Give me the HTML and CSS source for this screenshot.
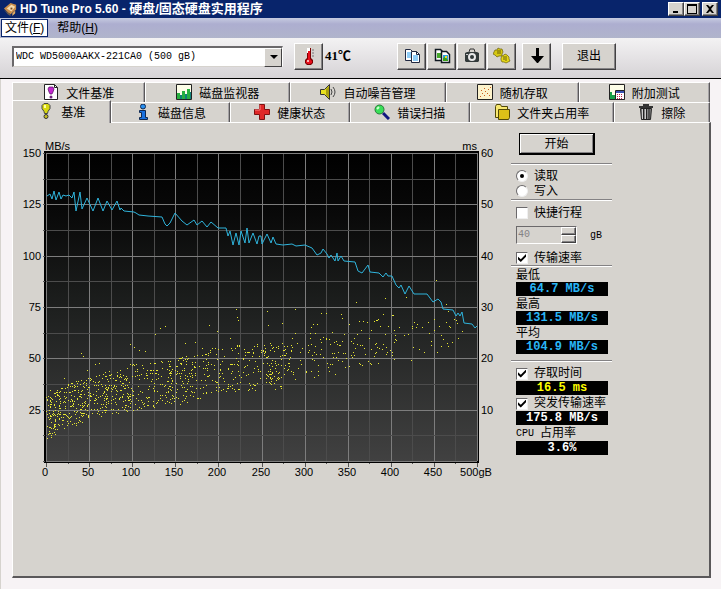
FILE: index.html
```
<!DOCTYPE html>
<html lang="zh-CN">
<head>
    <meta charset="UTF-8">
    <meta name="viewport" content="width=device-width, initial-scale=1.0">
    <title>HD Tune Pro 5.60</title>
    <link rel="stylesheet" href="styles.css">
</head>
<body>
    <header class="titlebar">
        <svg class="app-icon" viewBox="0 0 16 16">
            <path d="M1 7 L8 1 L14 3 L14 8 L8 13 L5 11z" fill="#c98d4a"/>
            <path d="M4 7 L9 3 L13 5 L9 10z" fill="#f6dcae"/>
            <path d="M8 6h2v2h-2z" fill="#7a4a20"/>
            <path d="M1 8 L5 11 L8 13 L8 15 L5 13z" fill="#6b5a4a"/>
            <path d="M10 12l3 -3v3l-3 3z" fill="#e8b060"/>
        </svg>
        <h1>HD Tune Pro 5.60 - <span>硬盘/固态硬盘实用程序</span></h1>
        <div class="window-buttons">
            <button aria-label="最小化"><svg viewBox="0 0 12 10"><path d="M3 7h5v2h-5z"/></svg></button>
            <button aria-label="最大化"><svg viewBox="0 0 12 10"><path d="M1 0h10v10h-10zM2 2v7h8v-7z" fill-rule="evenodd"/></svg></button>
            <button class="close" aria-label="关闭"><svg viewBox="0 0 12 10"><path d="M2 1h2l2 2 2-2h2L7 5l3 4H8L6 7 4 9H2l3-4z"/></svg></button>
        </div>
    </header>

    <nav class="menubar">
        <button class="open">文件(<u>F</u>)</button>
        <button>帮助(<u>H</u>)</button>
    </nav>

    <div class="toolbar">
        <div class="drive">
            <select aria-label="硬盘">
                <option>WDC WD5000AAKX-221CA0 (500 gB)</option>
            </select>
        </div>
        <button class="tool" aria-label="温度">
            <svg viewBox="0 0 18 18">
                <path d="M7 1h4v10l2 2v3l-2 2H7l-2-2v-3l2-2z" fill="#7b0000"/>
                <path d="M7 1h3v5H7z" fill="#fff"/>
                <path d="M8 4h2v8l2 2v2l-2 1H8l-2-1v-2l2-2z" fill="#e8101c"/>
                <path d="M7 13h2v2H7z" fill="#ffb0b0"/>
                <path d="M12 3h2M12 6h2M12 9h2" stroke="#777"/>
            </svg>
        </button>
        <span class="temp">41℃</span>
        <div class="tools">
            <button class="tool" aria-label="复制文本">
                <svg viewBox="0 0 18 18">
                    <path d="M2.500 2.500h5l2 2v9h-7z" fill="#fff" stroke="#202840"/>
                    <path d="M4 6h4M4 8h4M4 10h4" stroke="#209cf0"/>
                    <path d="M8.500 4.500h5l3 3v8h-8z" fill="#fff" stroke="#202840"/>
                    <path d="M13.500 4.500v3h3" fill="none" stroke="#202840"/>
                    <path d="M10 9h5M10 11h5M10 13h5" stroke="#209cf0"/>
                </svg>
            </button>
            <button class="tool" aria-label="复制图像">
                <svg viewBox="0 0 18 18">
                    <path d="M2.500 2.500h5l2 2v9h-7z" fill="#fff" stroke="#101820" stroke-width="1.500"/>
                    <path d="M4 6h4v5H4z" fill="#46a82c"/>
                    <path d="M8.500 4.500h5l3 3v8h-8z" fill="#fff" stroke="#101820" stroke-width="1.500"/>
                    <path d="M10 8h5v6h-5z" fill="#2aa0e0"/>
                    <path d="M10 14v-3l2-1 3 3v1z" fill="#38a018"/>
                    <path d="M12 9h2v2h-2z" fill="#f0e020"/>
                </svg>
            </button>
            <button class="tool" aria-label="截图">
                <svg viewBox="0 0 18 18">
                    <path d="M6 5l1-3h4l1 3" fill="none" stroke="#333" stroke-width="1"/>
                    <path d="M2 6l2-1h10l2 1v8l-1 1H3l-1-1z" fill="#333a3a"/>
                    <circle cx="9" cy="10" r="4" fill="#e8e8e8"/>
                    <circle cx="9" cy="10" r="2" fill="#303838"/>
                    <path d="M3 7h2v1H3z" fill="#ccc"/>
                </svg>
            </button>
            <button class="tool" aria-label="选项">
                <svg viewBox="0 0 18 18">
                    <path d="M1 5l1-2 2 0 1-2 2 1 2 0 1 3-1 2 0 2-3 0-2 1-2-2-2-1z" fill="#d6c810" stroke="#6a6008" stroke-width="0.700"/>
                    <path d="M8 11l1-2 2-1 1-1 2 1 2 2 0 2 1 2-2 1-2 1-2-1-2 0-1-2z" fill="#e6d818" stroke="#6a6008" stroke-width="0.700"/>
                    <path d="M5 3v4M7 3v4M11 9v4M13 9v5" stroke="#6a6008"/>
                </svg>
            </button>
            <button class="tool save" aria-label="保存">
                <svg viewBox="0 0 18 18"><path d="M8 1h3v8h5l-6 7h-1l-6-7h5z"/></svg>
            </button>
            <button class="exit">退出</button>
        </div>
    </div>

    <main>
        <div class="tabs" role="tablist">
            <div class="tab-row back">
                <button role="tab" class="w-133">
                    <svg viewBox="0 0 16 16">
                        <path d="M1.500 .5h10l3 3v12h-13z" fill="#fff" stroke="#222"/>
                        <path d="M11.500 .5v3h3" fill="none" stroke="#222"/>
                        <path d="M6 3h4l1 2-1 3-1 2H7L6 8 5 5z" fill="#c428d0" stroke="#50105c" stroke-width="0.700"/>
                        <circle cx="8" cy="13" r="1.500" fill="#70207c"/>
                    </svg>文件基准
                </button>
                <button role="tab" class="w-144">
                    <svg viewBox="0 0 16 16">
                        <path d="M.5 .5h15v15H.5z" fill="#fdfde8" stroke="#222"/>
                        <path d="M1 9h3v6H1zM6 7h3v8H6zM11 5h3v10h-3z" fill="#28b040"/>
                        <path d="M4 11h2v4H4zM9 10h2v5H9zM14 8h1v7h-1z" fill="#108078"/>
                    </svg>磁盘监视器
                </button>
                <button role="tab" class="w-156">
                    <svg viewBox="0 0 16 16">
                        <path d="M.5 5.500h4l5-5v15l-5-5h-4z" fill="#e8e020" stroke="#333"/>
                        <path d="M6 5v6l3 3V2z" fill="#aaa010"/>
                        <path d="M11 5q2 3 0 6M13 3q4 5 0 10" fill="none" stroke="#444"/>
                    </svg>自动噪音管理
                </button>
                <button role="tab" class="w-132">
                    <svg viewBox="0 0 16 16">
                        <path d="M.5 .5h15v15H.5z" fill="#fdf3cc" stroke="#222"/>
                        <path d="M3 12h1v1H3zM5 9h1v1H5zM4 6h1v1H4zM7 11h1v1H7zM8 7h1v1H8zM10 9h1v1h-1zM11 5h1v1h-1zM13 3h1v1h-1zM12 11h1v1h-1zM7 4h1v1H7z" fill="#d06020"/>
                    </svg>随机存取
                </button>
                <button role="tab" class="w-131">
                    <svg viewBox="0 0 16 16">
                        <path d="M.5 .5h15v15H.5z" fill="#fdfde8" stroke="#222"/>
                        <path d="M1 8h2v7H1zM3 11h3v4H3z" fill="#18a048"/>
                        <path d="M6.500 6.500h9v9h-9z" fill="#fff" stroke="#222"/>
                        <path d="M7 7h8v2H7z" fill="#3850b0"/>
                        <path d="M8 10h1v1H8zM10 10h1v1h-1zM12 10h1v1h-1zM8 12h1v1H8zM10 12h1v1h-1zM12 12h1v1h-1zM8 14h1v1H8zM10 14h1v1h-1zM12 14h1v1h-1z" fill="#c02050"/>
                    </svg>附加测试
                </button>
            </div>
            <div class="tab-row front">
                <button role="tab" class="w-99 active" aria-selected="true">
                    <svg viewBox="0 0 16 16">
                        <path d="M6 .5h4l2 2v3l-2 3-.5 2h-3L6 8.500 4 5.500v-3z" fill="#d8d810" stroke="#444"/>
                        <path d="M6 2h2v3H6z" fill="#ffffa0"/>
                        <circle cx="8" cy="13.500" r="2" fill="#c8c020" stroke="#333"/>
                    </svg>基准
                </button>
                <button role="tab" class="w-118">
                    <svg viewBox="0 0 16 16">
                        <circle cx="8" cy="2.500" r="2.500" fill="#2890f0" stroke="#102850"/>
                        <path d="M4.500 6.500h6v7h2v2h-8v-2h2v-5h-2z" fill="#1870e0" stroke="#102850"/>
                    </svg>磁盘信息
                </button>
                <button role="tab" class="w-120">
                    <svg viewBox="0 0 16 16">
                        <path d="M5.500 .5h5v5h5v5h-5v5h-5v-5h-5v-5h5z" fill="#e02828" stroke="#801010"/>
                        <path d="M6 1v5H1" fill="none" stroke="#ff8080"/>
                    </svg>健康状态
                </button>
                <button role="tab" class="w-120">
                    <svg viewBox="0 0 16 16">
                        <path d="M9 9l6 6" stroke="#101880" stroke-width="3"/>
                        <circle cx="5.500" cy="5.500" r="4.500" fill="#38e058" stroke="#287838"/>
                        <path d="M3 5l2-2" stroke="#d0ffd0" stroke-width="2"/>
                    </svg>错误扫描
                </button>
                <button role="tab" class="w-144">
                    <svg viewBox="0 0 16 16">
                        <path d="M1.500 13.500v-11l1-2h4l1 2h6v11z" fill="#f8e870" stroke="#504808"/>
                        <path d="M4.500 15.500v-10h11v8l-1 2z" fill="#dcc018" stroke="#504808"/>
                    </svg>文件夹占用率
                </button>
                <button role="tab" class="w-96">
                    <svg viewBox="0 0 16 16">
                        <path d="M5 0h6v2h4v2H1V2h4z" fill="#333"/>
                        <path d="M2.500 4.500h11l-1 11h-9z" fill="#808080" stroke="#222"/>
                        <path d="M5.500 5v10M8.500 5v10M11 5v10" stroke="#222"/>
                        <path d="M4.500 5v10M7.500 5v10" stroke="#ccc"/>
                    </svg>擦除
                </button>
            </div>
        </div>

        <section class="panel">
            <div class="chart">
                <svg id="chart" viewBox="13 137 484 344">
                    <defs>
                        <linearGradient id="plot-bg" x1="0" y1="0" x2="0" y2="1">
                            <stop offset="0" stop-color="#000"/>
                            <stop offset="0.200" stop-color="#090909"/>
                            <stop offset="0.500" stop-color="#1d1f1e"/>
                            <stop offset="1" stop-color="#414141"/>
                        </linearGradient>
                    </defs>
                    <rect x="44" y="151" width="435" height="312" fill="#000"/>
                    <rect x="46" y="153" width="431" height="308" fill="url(#plot-bg)"/>
                    <g id="grid" shape-rendering="crispEdges"></g>
                    <path id="access" fill="#e6e632" shape-rendering="crispEdges"/>
                    <polyline id="transfer" fill="none" stroke="#2fb4dc"/>
                    <g id="labels"></g>
                </svg>
            </div>

            <form class="side">
                <button type="button" class="start">开始</button>
                <hr>
                <div class="modes">
                    <label><input type="radio" name="mode" checked>读取</label>
                    <label><input type="radio" name="mode">写入</label>
                </div>
                <hr>
                <label class="short"><input type="checkbox">快捷行程</label>
                <div class="stroke-size">
                    <div class="spinner">
                        <input type="text" id="stroke" value="40" disabled>
                        <div class="spin-buttons">
                            <button type="button" aria-label="增加" disabled></button>
                            <button type="button" aria-label="减少" disabled></button>
                        </div>
                    </div>
                    <label for="stroke"><span class="latin">gB</span></label>
                </div>
                <label><input type="checkbox" checked>传输速率</label>
                <hr>
                <div class="results">
                    <label for="min">最低</label>
                    <output id="min" class="rate">64.7 MB/s</output>
                    <label for="max">最高</label>
                    <output id="max" class="rate">131.5 MB/s</output>
                    <label for="avg">平均</label>
                    <output id="avg" class="rate">104.9 MB/s</output>
                </div>
                <hr>
                <div class="results more">
                    <label><input type="checkbox" checked>存取时间</label>
                    <output class="time">16.5 ms</output>
                    <label><input type="checkbox" checked>突发传输速率</label>
                    <output>175.8 MB/s</output>
                    <label for="cpu"><span class="latin">CPU</span>占用率</label>
                    <output id="cpu">3.6%</output>
                </div>
            </form>
        </section>
    </main>

    <script>
        var LEFT = 46, RIGHT = 477, TOP = 153, BOTTOM = 461;

        function add(parent, tag, attrs, text) {
            var el = document.createElementNS('http://www.w3.org/2000/svg', tag);
            for (var key in attrs) {
                el.setAttribute(key, attrs[key]);
            }
            if (text !== undefined) {
                el.textContent = text;
            }
            document.getElementById(parent).appendChild(el);
        }

        // grid lines, every second one is a main line with a tick
        for (var i = 0; i <= 20; i++) {
            var x = Math.round(LEFT + i * (RIGHT - LEFT) / 20);
            var tick = i % 2 ? 1 : 4;
            add('grid', 'rect', {x: x, y: TOP, width: 1, height: BOTTOM - TOP, fill: i % 2 ? '#4c4c4c' : '#7d7d7d'});
            add('grid', 'rect', {x: x, y: BOTTOM + 2, width: 1, height: tick, fill: '#555'});
            if (i % 2 === 0) {
                add('labels', 'text', {x: x - 1, y: 476, 'text-anchor': 'middle'}, i === 20 ? '500gB' : i * 25);
            }
        }
        for (var j = 0; j <= 12; j++) {
            var y = Math.round(TOP + j * (BOTTOM - TOP) / 12);
            add('grid', 'rect', {x: LEFT, y: y, width: RIGHT - LEFT, height: 1, fill: j % 2 ? '#4c4c4c' : '#7d7d7d'});
            add('grid', 'rect', {x: 43, y: y, width: 2, height: 1, fill: '#555'});
            if (j % 2 === 0 && j < 12) {
                add('labels', 'text', {x: 41, y: y + 4, 'text-anchor': 'end'}, 150 - j / 2 * 25);
                add('labels', 'text', {x: 481, y: y + 4}, 60 - j / 2 * 10);
            }
        }
        add('labels', 'text', {x: 45, y: 150}, 'MB/s');
        add('labels', 'text', {x: 477, y: 150, 'text-anchor': 'end'}, 'ms');

        // transfer rate
        var transfer = [
            47,196, 50,194, 52,199, 54,191, 56,200, 59,192, 61,199, 63,195, 66,196, 69,195, 72,198, 74,192,
            76,211, 80,192, 82,209, 87,198, 93,211, 98,198, 103,211, 107,201, 112,210, 117,201, 120,210,
            121,208, 124,211, 134,212, 136,213, 139,215, 148,216, 162,217, 165,224, 167,226, 170,223,
            173,217, 175,213, 182,221, 187,225, 194,220, 197,225, 202,221, 207,227, 211,222, 218,228,
            226,228, 228,236, 230,231, 233,245, 236,233, 239,245, 241,231, 245,243, 247,228, 249,243,
            253,233, 257,244, 259,236, 261,236, 262,244, 267,234, 271,243, 273,237, 276,244, 283,245,
            292,244, 296,246, 305,245, 312,248, 317,255, 321,253, 323,249, 327,254, 329,258, 331,255,
            335,261, 337,253, 338,261, 341,256, 344,261, 355,262, 358,271, 362,273, 368,265, 370,272,
            379,273, 383,277, 386,273, 388,276, 392,276, 396,285, 399,288, 401,285, 405,294, 409,286,
            414,294, 427,294, 433,302, 438,299, 441,302, 443,309, 453,310, 456,316, 458,313, 460,316,
            462,312, 464,323, 472,324, 475,328, 477,326
        ];
        document.getElementById('transfer').setAttribute('points', transfer.join(' '));

        // access time: from x, to x, number of samples, upper and lower edge at both ends
        var bands = [
            [46, 60, 100, 396, 441, 388, 431],
            [60, 90, 150, 386, 432, 376, 421],
            [90, 130, 180, 376, 418, 366, 412],
            [130, 200, 230, 364, 411, 354, 401],
            [200, 288, 230, 347, 394, 342, 389],
            [288, 345, 75, 334, 383, 330, 375],
            [345, 400, 60, 322, 373, 318, 360],
            [400, 462, 28, 322, 358, 318, 350]
        ];
        var seed = 71;
        function random() {
            seed = (seed * 16807) % 2147483647;
            return seed / 2147483647;
        }
        var d = '';
        function dot(x, y) {
            d += 'M' + Math.round(x) + ' ' + Math.round(y) + 'h1v1h-1z';
        }
        bands.forEach(function (b) {
            for (var n = 0; n < b[2]; n++) {
                var t = random();
                var upper = b[3] + t * (b[5] - b[3]);
                var lower = b[4] + t * (b[6] - b[4]);
                dot(b[0] + t * (b[1] - b[0]), upper + random() * (lower - upper));
            }
        });
        // slow samples outside of the bands
        var outliers = [
            81,353, 83,356, 130,344, 134,347, 139,350, 145,351, 155,334, 160,328, 165,326, 185,343, 195,342,
            209,325, 217,331, 230,338, 237,317, 238,320, 236,309, 267,311, 268,325, 282,323, 295,309, 295,333,
            311,327, 313,324, 317,324, 321,313, 326,313, 341,314, 342,318, 356,302, 374,321, 378,319, 385,298,
            383,314, 393,315, 406,297, 436,280, 446,304, 457,323, 462,331, 411,360, 437,352, 64,378, 50,390,
            87,370, 95,364, 99,363, 448,311, 392,315, 429,333, 434,319
        ];
        for (var k = 0; k < outliers.length; k += 2) {
            dot(outliers[k], outliers[k + 1]);
        }
        document.getElementById('access').setAttribute('d', d);
    </script>
</body>
</html>
```
FILE: styles.css
```
* {
    box-sizing: border-box;
}

body {
    margin: 0;
    min-height: 100vh;
    display: flex;
    flex-direction: column;
    background-color: #f7f3f5;
    font-family: "Liberation Sans", "Noto Sans CJK SC", sans-serif;
    font-size: 12px;
    line-height: 16px;
    color: #000;
}

button, select, input {
    margin: 0;
    padding: 0;
    font: inherit;
    color: inherit;
}

button {
    display: flex;
    align-items: center;
    justify-content: center;
    background-color: #d6d3ce;
    border: 1px solid #fff;
    border-right-color: #424142;
    border-bottom-color: #424142;
    box-shadow: inset -1px -1px 0 #848284;
}

/* title bar */

.titlebar {
    display: flex;
    align-items: center;
    height: 18px;
    padding: 0 3px;
    background-color: #08246b;
    color: #fff;
}

.app-icon {
    width: 15px;
    height: 15px;
    margin-right: 2px;
}

.titlebar h1 {
    flex: 1;
    margin: 0;
    font-size: 12px;
    line-height: 18px;
    white-space: nowrap;
}

.titlebar h1 span {
    font-size: 13px;
}

.window-buttons {
    display: flex;
}

.window-buttons button {
    width: 16px;
    height: 14px;
}

.window-buttons .close {
    margin-left: 2px;
}

.window-buttons svg {
    width: 12px;
    height: 10px;
}

/* menu */

.menubar {
    display: flex;
    gap: 5px;
    height: 20px;
    padding: 1px;
    background: linear-gradient(#c6cbe0, #adaed0 30%, #b0b4cb);
}

.menubar button {
    height: 18px;
    padding: 0 3px;
    background: none;
    border: 1px solid transparent;
    box-shadow: none;
}

.menubar .open {
    background-color: #fff;
    border-color: #08246b;
}

/* toolbar */

.toolbar {
    display: flex;
    align-items: center;
    height: 41px;
    padding: 0 12px 4px;
    background: linear-gradient(#f3f2f3, #d6d3d6);
    border-bottom: 1px solid #000;
}

.drive {
    position: relative;
    flex: 0 1 271px;
    height: 21px;
    margin-right: 11px;
}

.drive select {
    appearance: none;
    width: 100%;
    height: 100%;
    padding-left: 2px;
    background-color: #fff;
    border: 2px solid #6b696b;
    border-right: 1px solid #fff;
    border-bottom: 1px solid #d6d3ce;
    border-radius: 0;
    font-family: "Liberation Mono", monospace;
    font-size: 10px;
}

.drive::before {
    content: "";
    position: absolute;
    top: 2px;
    right: 1px;
    width: 16px;
    height: 17px;
    background-color: #d6d3ce;
    border: 1px solid #fff;
    border-right-color: #424142;
    border-bottom-color: #424142;
    pointer-events: none;
}

.drive::after {
    content: "";
    position: absolute;
    top: 9px;
    right: 5px;
    border: 4px solid transparent;
    border-top-color: #000;
    border-bottom: 0;
    pointer-events: none;
}

.tool {
    width: 29px;
    height: 27px;
}

.tool svg {
    width: 18px;
    height: 18px;
}

.temp {
    width: 74px;
    padding-left: 2px;
    font-family: "Liberation Serif", "Noto Sans CJK SC", serif;
    font-size: 13px;
    font-weight: bold;
}

.tools {
    display: flex;
    gap: 1px;
}

.tools .save {
    margin-left: 5px;
}

.exit {
    width: 54px;
    height: 27px;
    margin-left: 10px;
}

/* tabs */

main {
    flex: 1;
    display: flex;
    flex-direction: column;
    padding: 3px 10px 11px 11px;
    border-left: 1px solid #d6d3ce;
}

.tabs {
    margin-right: 1px;
    background-color: #d6d3ce;
}

.tab-row {
    display: flex;
    height: 20px;
}

.tab-row button {
    min-width: 0;
    gap: 7px;
    padding-top: 3px;
    border-color: #fff #5a585a #d6d3ce #fff;
    border-bottom: 0;
    box-shadow: inset -1px 0 0 #a5a2a5;
    line-height: 16px;
    white-space: nowrap;
}

.tab-row svg {
    width: 16px;
    height: 16px;
    flex: none;
    margin-bottom: 4px;
}

.tab-row .active {
    position: relative;
    margin-top: -2px;
    margin-bottom: -1px;
    padding-top: 1px;
}

.w-96 { flex: 96 1 0; }
.w-99 { flex: 99 1 0; }
.w-118 { flex: 118 1 0; }
.w-120 { flex: 120 1 0; }
.w-131 { flex: 131 1 0; }
.w-132 { flex: 132 1 0; }
.w-133 { flex: 133 1 0; }
.w-144 { flex: 144 1 0; }
.w-156 { flex: 156 1 0; }

.panel {
    flex: 1;
    display: flex;
    align-items: flex-start;
    background-color: #d6d3ce;
    border: 1px solid #fff;
    border-right: 2px solid #5a585a;
    border-bottom: 2px solid #5a585a;
}

/* chart */

.chart {
    flex: 1;
    min-width: 0;
    padding-top: 14px;
}

.chart svg {
    display: block;
    width: 100%;
}

.chart text {
    font-family: "Liberation Sans", sans-serif;
    font-size: 11px;
}

/* right column */

.side {
    width: 101px;
    margin: 10px 97px 10px 14px;
}

.side > *, .results {
    margin-left: 5px;
}

.side hr {
    height: 2px;
    margin: 0;
    border: 0;
    border-top: 1px solid #848284;
    border-bottom: 1px solid #fff;
}

.side label {
    display: flex;
    align-items: center;
    height: 15px;
    padding-top: 1px;
    line-height: 15px;
    white-space: nowrap;
}

.latin {
    margin-right: 6px;
    font-family: "Liberation Mono", monospace;
    font-size: 10px;
}

.side .start {
    width: 76px;
    height: 22px;
    margin: 0 0 8px 8px;
    border: 2px solid #000;
    border-top-width: 1px;
    border-left-width: 1px;
    box-shadow: inset 1px 1px 0 #fff, inset -1px -1px 0 #848284;
}

.modes {
    padding: 3px 0 1px;
}

.side input[type="radio"], .side input[type="checkbox"] {
    appearance: none;
    display: flex;
    align-items: center;
    justify-content: center;
    width: 12px;
    height: 12px;
    margin-right: 6px;
    background-color: #fff;
    border: 1px solid #6b696b;
    border-right-color: #efefef;
    border-bottom-color: #efefef;
}

.side input[type="radio"] {
    border-radius: 50%;
}

.side input[type="radio"]:checked::before {
    content: "";
    width: 4px;
    height: 4px;
    border-radius: 50%;
    background-color: #000;
}

.side input[type="checkbox"]:checked::before {
    content: "";
    width: 8px;
    height: 8px;
    background-color: #000;
    clip-path: polygon(0 35%, 35% 65%, 100% 0, 100% 35%, 35% 100%, 0 70%);
}

.side .short {
    margin-top: 4px;
}

.stroke-size {
    display: flex;
    align-items: center;
    gap: 13px;
    margin: 6px 0 6px 5px;
}

.spinner {
    display: flex;
    width: 61px;
    height: 18px;
    border: 1px solid #6b696b;
    border-right-color: #fff;
    border-bottom-color: #fff;
}

.spinner input {
    flex: 1;
    min-width: 0;
    padding-left: 1px;
    border: 0;
    background-color: #d6d3ce;
    color: #848284;
    font-family: "Liberation Mono", monospace;
    font-size: 10px;
}

.spin-buttons {
    width: 15px;
}

.spin-buttons button {
    width: 15px;
    height: 8px;
}

.results {
    width: 92px;
}

.more {
    margin-top: 3px;
}

.results output {
    display: block;
    height: 14px;
    background-color: #000;
    color: #fff;
    font-family: "Liberation Mono", monospace;
    font-size: 12px;
    font-weight: bold;
    line-height: 14px;
    text-align: center;
}

.results .rate {
    color: #29b6f7;
}

.results .time {
    color: #ff0;
}

.results + hr {
    margin-top: 6px;
}

.more label {
    height: 16px;
}
```
